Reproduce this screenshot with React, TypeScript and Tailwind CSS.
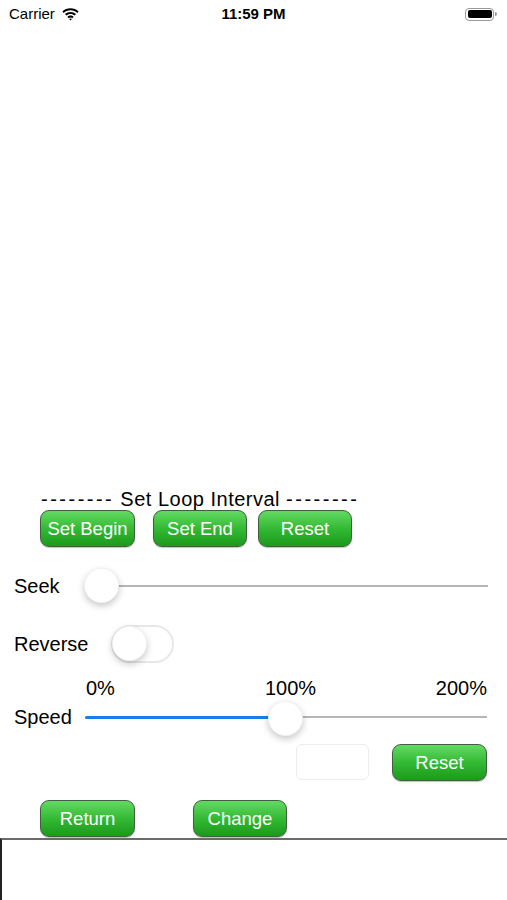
const FONT = "font-['Liberation_Sans',Arial,sans-serif]";

function GreenButton({ label, className = '' }: { label: string; className?: string }) {
  return (
    <button
      className={`h-[37px] pt-[2px] rounded-[9px] border border-[#3f5f3f] bg-gradient-to-b from-[#62da62] via-[#33ba33] to-[#1b9a1b] text-white text-[18.5px] leading-none shadow-[0_1px_1px_rgba(0,0,0,0.25)] ${className}`}
    >
      {label}
    </button>
  );
}

function Thumb({ className = '' }: { className?: string }) {
  return (
    <div
      className={`absolute w-[35px] h-[35px] rounded-full bg-white border border-black/5 shadow-[0_3px_7px_rgba(0,0,0,0.22)] ${className}`}
    />
  );
}

function Wifi() {
  return (
    <svg width="17" height="13" viewBox="0 0 17 13">
      <path d="M8.5 2.2c2.6 0 5 1 6.8 2.7l1.3-1.4C14.5 1.5 11.6.3 8.5.3S2.5 1.5.4 3.5l1.3 1.4C3.5 3.2 5.9 2.2 8.5 2.2z" fill="#000" />
      <path d="M8.5 5.9c1.6 0 3.1.6 4.2 1.6l1.3-1.4C12.6 4.8 10.6 4 8.5 4S4.4 4.8 3 6.1l1.3 1.4c1.1-1 2.6-1.6 4.2-1.6z" fill="#000" />
      <path d="M8.5 9.5c.7 0 1.3.3 1.8.7l1.3-1.4C10.8 8.1 9.7 7.6 8.5 7.6S6.2 8.1 5.4 8.8l1.3 1.4c.5-.4 1.1-.7 1.8-.7z" fill="#000" />
      <path d="M8.5 12.6l1.4-1.5c-.4-.3-.9-.5-1.4-.5s-1 .2-1.4.5z" fill="#000" />
    </svg>
  );
}

export default function App() {
  return (
    <div className={`w-[507px] h-[900px] bg-white flex flex-col text-black ${FONT}`}>
      {/* status bar */}
      <div className="h-[28px] grid grid-cols-3 items-center px-[9px]">
        <div className="flex items-center gap-[7px] text-[15px]">
          <span>Carrier</span>
          <Wifi />
        </div>
        <div className="text-center text-[15px] font-bold">11:59 PM</div>
        <div className="flex justify-end items-center pr-[1px]">
          <div className="w-[29px] h-[13px] rounded-[4px] border border-[#999] p-[1.5px]">
            <div className="w-full h-full rounded-[2px] bg-black" />
          </div>
          <div className="w-[2px] h-[4px] rounded-r-sm bg-[#999] ml-[1px]" />
        </div>
      </div>

      {/* video area */}
      <div className="h-[461px]" />

      {/* loop interval */}
      <div className="h-[21px] leading-[21px] text-[20px] pl-[41px] whitespace-nowrap">
        <span className="tracking-[2.5px]">--------</span>
        <span className="tracking-[0.5px]"> Set Loop Interval </span>
        <span className="tracking-[2.5px]">--------</span>
      </div>
      <div className="flex h-[37px]">
        <GreenButton label="Set Begin" className="ml-[40px] w-[95px]" />
        <GreenButton label="Set End" className="ml-[18px] w-[94px]" />
        <GreenButton label="Reset" className="ml-[11px] w-[94px]" />
      </div>

      {/* seek */}
      <div className="mt-[21px] h-[36px] flex items-center">
        <span className="ml-[14px] w-[69px] text-[20px]">Seek</span>
        <div className="relative w-[405px] h-[36px] flex items-center">
          <div className="ml-[18px] flex-1 h-[2px] bg-[#b6b6b6]" />
          <Thumb className="left-[1px] top-[0px]" />
        </div>
      </div>

      {/* reverse */}
      <div className="mt-[21px] h-[38px] flex items-center">
        <span className="ml-[14px] w-[97px] text-[20px]">Reverse</span>
        <div className="relative w-[63px] h-[38px] rounded-full bg-white border-2 border-[#e8e8e8]">
          <Thumb className="left-[-1px] top-[-1px] w-[35px] h-[35px]" />
        </div>
      </div>

      {/* speed labels */}
      <div className="mt-[14px] h-[22px] leading-[22px] text-[20px] flex">
        <span className="ml-[86px]">0%</span>
        <span className="ml-[150px]">100%</span>
        <span className="ml-auto mr-[20px]">200%</span>
      </div>

      {/* speed */}
      <div className="mt-[1px] h-[34px] flex items-center">
        <span className="ml-[14px] w-[71px] text-[20px]">Speed</span>
        <div className="relative w-[402px] h-[34px] flex items-center">
          <div className="w-[200px] h-[3px] bg-[#1a7ce6] rounded-l-full" />
          <div className="flex-1 h-[2px] bg-[#b6b6b6]" />
          <Thumb className="left-[183px] top-[1px] w-[34px] h-[34px]" />
        </div>
      </div>

      {/* speed value + reset */}
      <div className="mt-[10px] h-[36px] flex">
        <div className="ml-[296px] w-[73px] h-[36px] rounded-[6px] border border-[#ececec] bg-white" />
        <GreenButton label="Reset" className="ml-[23px] w-[95px] h-[36px]" />
      </div>

      {/* return / change */}
      <div className="mt-[20px] h-[37px] flex">
        <GreenButton label="Return" className="ml-[40px] w-[95px]" />
        <GreenButton label="Change" className="ml-[58px] w-[94px]" />
      </div>

      {/* bottom box */}
      <div className="mt-[1px] flex-1 border-t-2 border-t-[#6a6a6a] border-l-2 border-l-[#222]" />
    </div>
  );
}
